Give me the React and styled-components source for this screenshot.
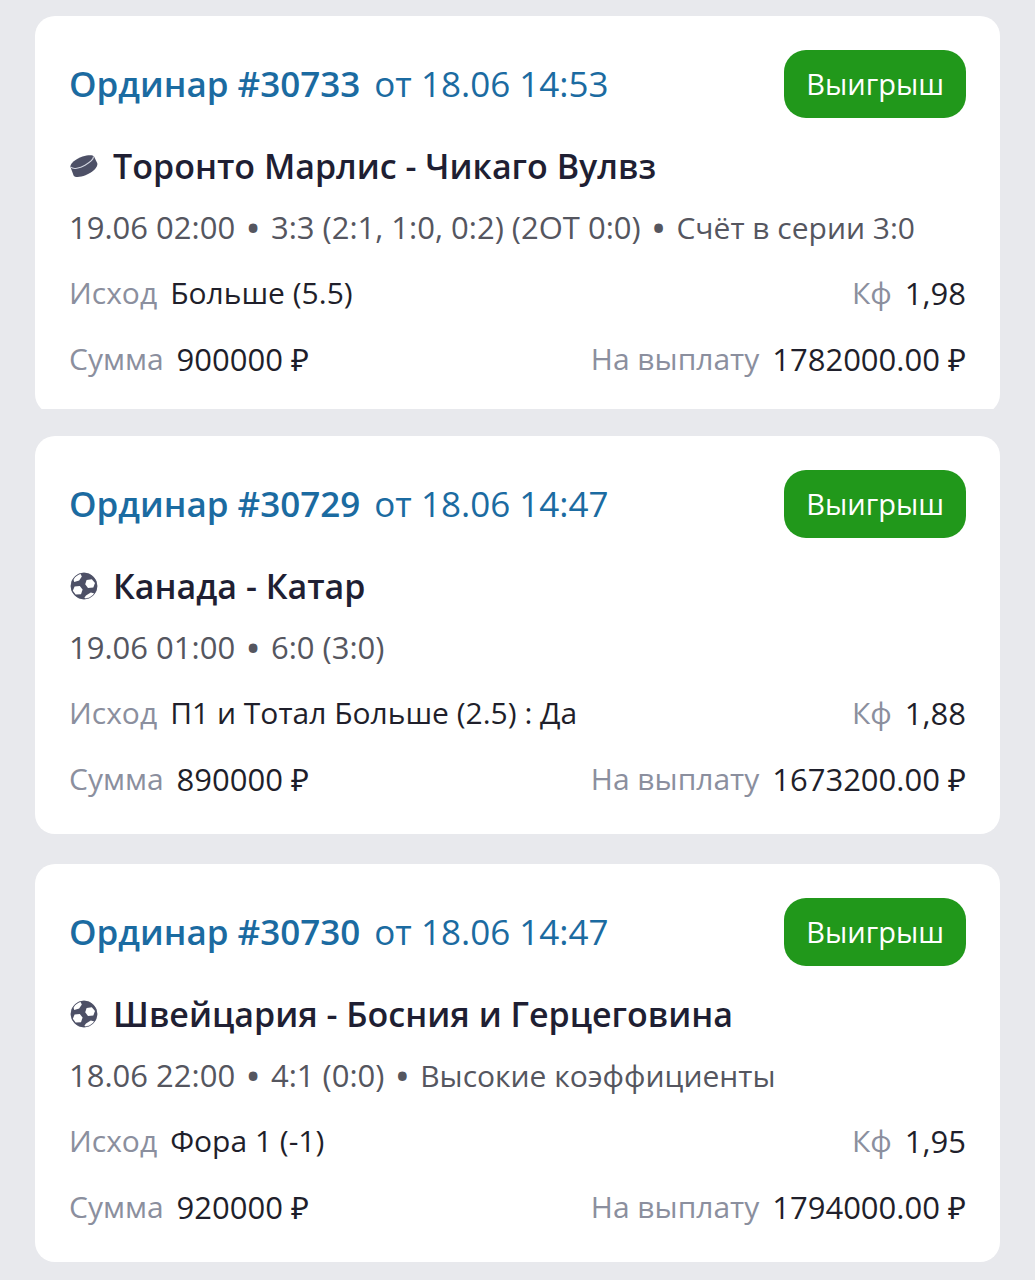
import { Fragment } from "react";
import styled, { createGlobalStyle } from "styled-components";

const GlobalStyle = createGlobalStyle`
  * {
    box-sizing: border-box;
  }

  body {
    margin: 0;
    background: #e8e9ed;
    color: #1f1f33;
    font-family: "Open Sans", "Noto Sans", sans-serif;
    font-size: 31px;
    line-height: 44px;
  }
`;

export const BetList = styled.main`
  display: flex;
  flex-direction: column;
  gap: 30px;
  padding: 16px 35px 18px;
`;

export const Card = styled.article`
  padding: 34px 34px 33px;
  border-radius: 20px;
  background: #ffffff;
  ${({ $cropped }) =>
    $cropped &&
    `
    margin-bottom: -8px;
    clip-path: inset(0 0 5px 0);
  `}
`;

export const CardHeader = styled.header`
  display: flex;
  justify-content: space-between;
  align-items: center;
`;

export const BetLink = styled.a`
  color: #1b6ba1;
  font-size: 35px;
  text-decoration: none;
`;

export const BetNumber = styled.strong`
  margin-right: 14px;
  font-weight: 600;
`;

export const Status = styled.span`
  padding: 12px 22px;
  border-radius: 22px;
  background: #21981b;
  color: #ffffff;
  font-size: 29px;
`;

export const Match = styled.div`
  display: flex;
  align-items: center;
  gap: 14px;
  margin-top: 26px;
`;

export const MatchName = styled.h2`
  margin: 0;
  font-size: 34px;
  font-weight: 600;
`;

export const SportIcon = styled.svg`
  flex: none;
  width: 30px;
  height: 28px;
`;

export const Details = styled.p`
  margin: 17px 0 0;
  color: #55565f;
`;

export const Bullet = styled.span`
  margin: 0 4px;
  font-weight: 700;
`;

export const Note = styled.span`
  font-size: 30px;
  line-height: 1;
`;

export const Row = styled.div`
  display: flex;
  justify-content: space-between;
  margin-top: 22px;
`;

export const Field = styled.div`
  display: flex;
  gap: 13px;
`;

export const Label = styled.span`
  color: #8b8f9e;
  font-size: 30px;
`;

export const Value = styled.span`
  color: #1f1f2b;
  font-size: ${({ $text }) => ($text ? "30px" : "31px")};
`;

const bets = [
  {
    number: "30733",
    date: "18.06 14:53",
    sport: "hockey",
    match: "Торонто Марлис - Чикаго Вулвз",
    details: ["19.06 02:00", "3:3 (2:1, 1:0, 0:2) (2ОТ 0:0)"],
    note: "Счёт в серии 3:0",
    outcome: "Больше (5.5)",
    odds: "1,98",
    amount: "900000 ₽",
    payout: "1782000.00 ₽",
    cropped: true,
  },
  {
    number: "30729",
    date: "18.06 14:47",
    sport: "football",
    match: "Канада - Катар",
    details: ["19.06 01:00", "6:0 (3:0)"],
    outcome: "П1 и Тотал Больше (2.5) : Да",
    odds: "1,88",
    amount: "890000 ₽",
    payout: "1673200.00 ₽",
  },
  {
    number: "30730",
    date: "18.06 14:47",
    sport: "football",
    match: "Швейцария - Босния и Герцеговина",
    details: ["18.06 22:00", "4:1 (0:0)"],
    note: "Высокие коэффициенты",
    outcome: "Фора 1 (-1)",
    odds: "1,95",
    amount: "920000 ₽",
    payout: "1794000.00 ₽",
  },
];

function Puck() {
  return (
    <SportIcon viewBox="0 0 30 28" aria-hidden="true">
      <path
        d="M1.400 14.800C1.200 11.500 6.500 7.200 13.500 4.600C19 2.700 23.800 2.600 25 4.600L28.300 11.200C29.300 15 23.500 20.400 16.500 23.200C11.500 25.100 6 25.700 4.600 23.400Z"
        fill="#4d5066"
      />
      <path
        d="M1.900 15.200C4.400 17.600 10.600 16.200 16 13.200C20.800 10.500 24.600 7.200 24.500 4.600"
        fill="none"
        stroke="#d4d7e2"
        strokeWidth="1.100"
      />
    </SportIcon>
  );
}

function Ball() {
  return (
    <SportIcon viewBox="0 0 30 28" aria-hidden="true">
      <circle cx="15" cy="14" r="13.200" fill="#4d5066" />
      <g fill="#ffffff">
        <path d="M4.500 7.500C6 4.800 8.500 2.800 11.500 1.800L12.800 4.400L10.200 8.600L5.200 10Z" />
        <path d="M17.600 8L22.800 7.200L26 11L24.300 15.600L19 16L16.200 12.200Z" />
        <path d="M5.600 14.600L10.800 14L13.600 17.600L12 22.200L6.600 22.600L3.800 18.800Z" />
        <path d="M17 23.400L21.800 20.600L25.400 21.400C23.200 24.400 20.300 26.400 16.500 26.800L15.400 25.800Z" />
      </g>
      <circle cx="15" cy="14" r="13" fill="none" stroke="#4d5066" strokeWidth="0.600" />
    </SportIcon>
  );
}

function BetCard({ bet }) {
  return (
    <Card $cropped={bet.cropped}>
      <CardHeader>
        <BetLink href={`#${bet.number}`}>
          <BetNumber>Ординар #{bet.number}</BetNumber>
          от {bet.date}
        </BetLink>
        <Status>Выигрыш</Status>
      </CardHeader>
      <Match>
        {bet.sport === "hockey" ? <Puck /> : <Ball />}
        <MatchName>{bet.match}</MatchName>
      </Match>
      <Details>
        {bet.details.map((item, index) => (
          <Fragment key={item}>
            {index > 0 && <Bullet> • </Bullet>}
            {item}
          </Fragment>
        ))}
        {bet.note && (
          <>
            <Bullet> • </Bullet>
            <Note>{bet.note}</Note>
          </>
        )}
      </Details>
      <Row>
        <Field>
          <Label>Исход</Label>
          <Value $text>{bet.outcome}</Value>
        </Field>
        <Field>
          <Label>Кф</Label>
          <Value>{bet.odds}</Value>
        </Field>
      </Row>
      <Row>
        <Field>
          <Label>Сумма</Label>
          <Value>{bet.amount}</Value>
        </Field>
        <Field>
          <Label>На выплату</Label>
          <Value>{bet.payout}</Value>
        </Field>
      </Row>
    </Card>
  );
}

function App() {
  return (
    <>
      <GlobalStyle />
      <BetList>
        {bets.map((bet) => (
          <BetCard key={bet.number} bet={bet} />
        ))}
      </BetList>
    </>
  );
}

export default App;
